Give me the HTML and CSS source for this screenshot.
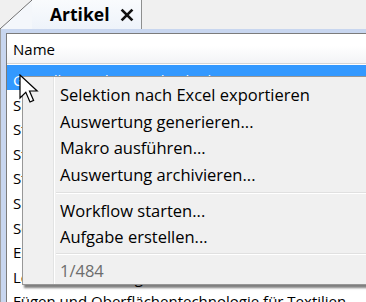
FILE: index.html
```html
<!DOCTYPE html>
<html lang="de">
<head>
  <meta charset="UTF-8" />
  <title>Artikel</title>
  <link rel="stylesheet" href="styles.css">
</head>
<body>
  <div class="window">
    <div class="tabstrip">
      <div class="tab-corner"></div>
      <div class="tab">
        <span class="tab-title">Artikel</span>
        <svg class="tab-close" width="14" height="14" viewBox="0 0 14 14">
          <path d="M1.6 1.6 L12.4 12.4 M12.4 1.6 L1.6 12.4" stroke="#111" stroke-width="2.7"/>
        </svg>
      </div>
    </div>

    <div class="frame">
      <div class="panel">
        <div class="col-header">Name</div>
        <ul class="rows">
          <li class="row selected">Grundlagen der Textiltechnik</li>
          <li class="row">Spinnereitechnik</li>
          <li class="row">Stricktechnologie</li>
          <li class="row">Strukturanalyse</li>
          <li class="row">Stickerei</li>
          <li class="row">Siebdruck</li>
          <li class="row">Schlichtetechnik</li>
          <li class="row">Entwicklung technischer Textilien</li>
          <li class="row">Lederverarbeitung</li>
          <li class="row">Fügen und Oberflächentechnologie für Textilien</li>
        </ul>
      </div>
    </div>

    <div class="context-menu">
      <div class="menu-item">Selektion nach Excel exportieren</div>
      <div class="menu-item">Auswertung generieren...</div>
      <div class="menu-item">Makro ausführen...</div>
      <div class="menu-item">Auswertung archivieren...</div>
      <div class="menu-sep first"></div>
      <div class="menu-item">Workflow starten...</div>
      <div class="menu-item">Aufgabe erstellen...</div>
      <div class="menu-sep"></div>
      <div class="menu-item disabled">1/484</div>
    </div>

    <svg class="cursor" width="21" height="31" viewBox="0 0 21 31">
      <path d="M1 1 L1 24 L6.8 18.3 L11 28 L14.6 26.4 L10.5 17 L18.2 17 Z" fill="#fff" stroke="#000" stroke-width="1.2" stroke-linejoin="miter"/>
    </svg>
  </div>
</body>
</html>
```

FILE: styles.css
```css
body {
  margin: 0;
  background: #f0f0f0;
  font-family: "Open Sans", "Noto Sans", sans-serif;
  font-size: 15px;
  color: #000;
}
.window {
  position: relative;
  width: 366px;
  height: 302px;
  overflow: hidden;
}
.tabstrip {
  display: flex;
  height: 29px;
}
.tab-corner {
  width: 32px;
  height: 29px;
  background: linear-gradient(to bottom right, #f0f0f0 calc(50% - 0.7px), #6a6a6a 50%, #f4f7fb calc(50% + 0.7px));
}
.tab {
  width: 110px;
  display: flex;
  align-items: center;
  gap: 10px;
  padding-left: 18px;
  box-sizing: border-box;
  background: linear-gradient(#f9fbfd, #eef3fa);
  border-right: 1px solid #8e8f8f;
}
.tab-title {
  font-weight: bold;
  font-size: 17.5px;
  line-height: 29px;
}
.tab-close {
  flex: none;
  margin-top: 1px;
}
.frame {
  height: 273px;
  background: #c8d6ef;
  border-left: 1px solid #a0a0a0;
  padding: 4px 0 0 5px;
  box-sizing: border-box;
}
.panel {
  height: 100%;
  background: #fff;
  border-top: 1px solid #7b7b7b;
  border-left: 1px solid #7b7b7b;
}
.col-header {
  height: 29px;
  padding-left: 6px;
  line-height: 31px;
  background: linear-gradient(#ffffff 0%, #ffffff 40%, #f3f4f6 100%);
  border-bottom: 1px solid #d5d5d5;
}
.rows {
  list-style: none;
  margin: 1px 0 0;
  padding: 0;
}
.row {
  height: 24.6px;
  padding: 3px 0 0 6px;
  line-height: 24px;
  box-sizing: border-box;
  white-space: nowrap;
}
.row.selected {
  background: #3399ff;
  color: #fff;
}
.context-menu {
  position: absolute;
  left: 22px;
  top: 76px;
  width: 360px;
  height: 209px;
  box-sizing: border-box;
  padding: 5px 0 0;
  font-size: 16.5px;
  background: #f0f0f0 linear-gradient(to right, transparent 30px, #e2e3e3 30px, #e2e3e3 31px, #ffffff 31px, #ffffff 32px, transparent 32px);
  border: 1px solid #979797;
  box-shadow: 2px 3px 2px rgba(0, 0, 0, 0.5);
}
.menu-item {
  height: 26.7px;
  line-height: 26.7px;
  padding-left: 37px;
  white-space: nowrap;
}
.menu-item.disabled {
  color: #6d6d6d;
}
.menu-sep {
  height: 1px;
  margin: 2px 0 3px 33px;
  background: #e0e0e0;
  border-bottom: 1px solid #ffffff;
}
.menu-sep.first {
  margin: 3px 0 4px 33px;
}
.cursor {
  position: absolute;
  left: 19px;
  top: 74px;
}
```
